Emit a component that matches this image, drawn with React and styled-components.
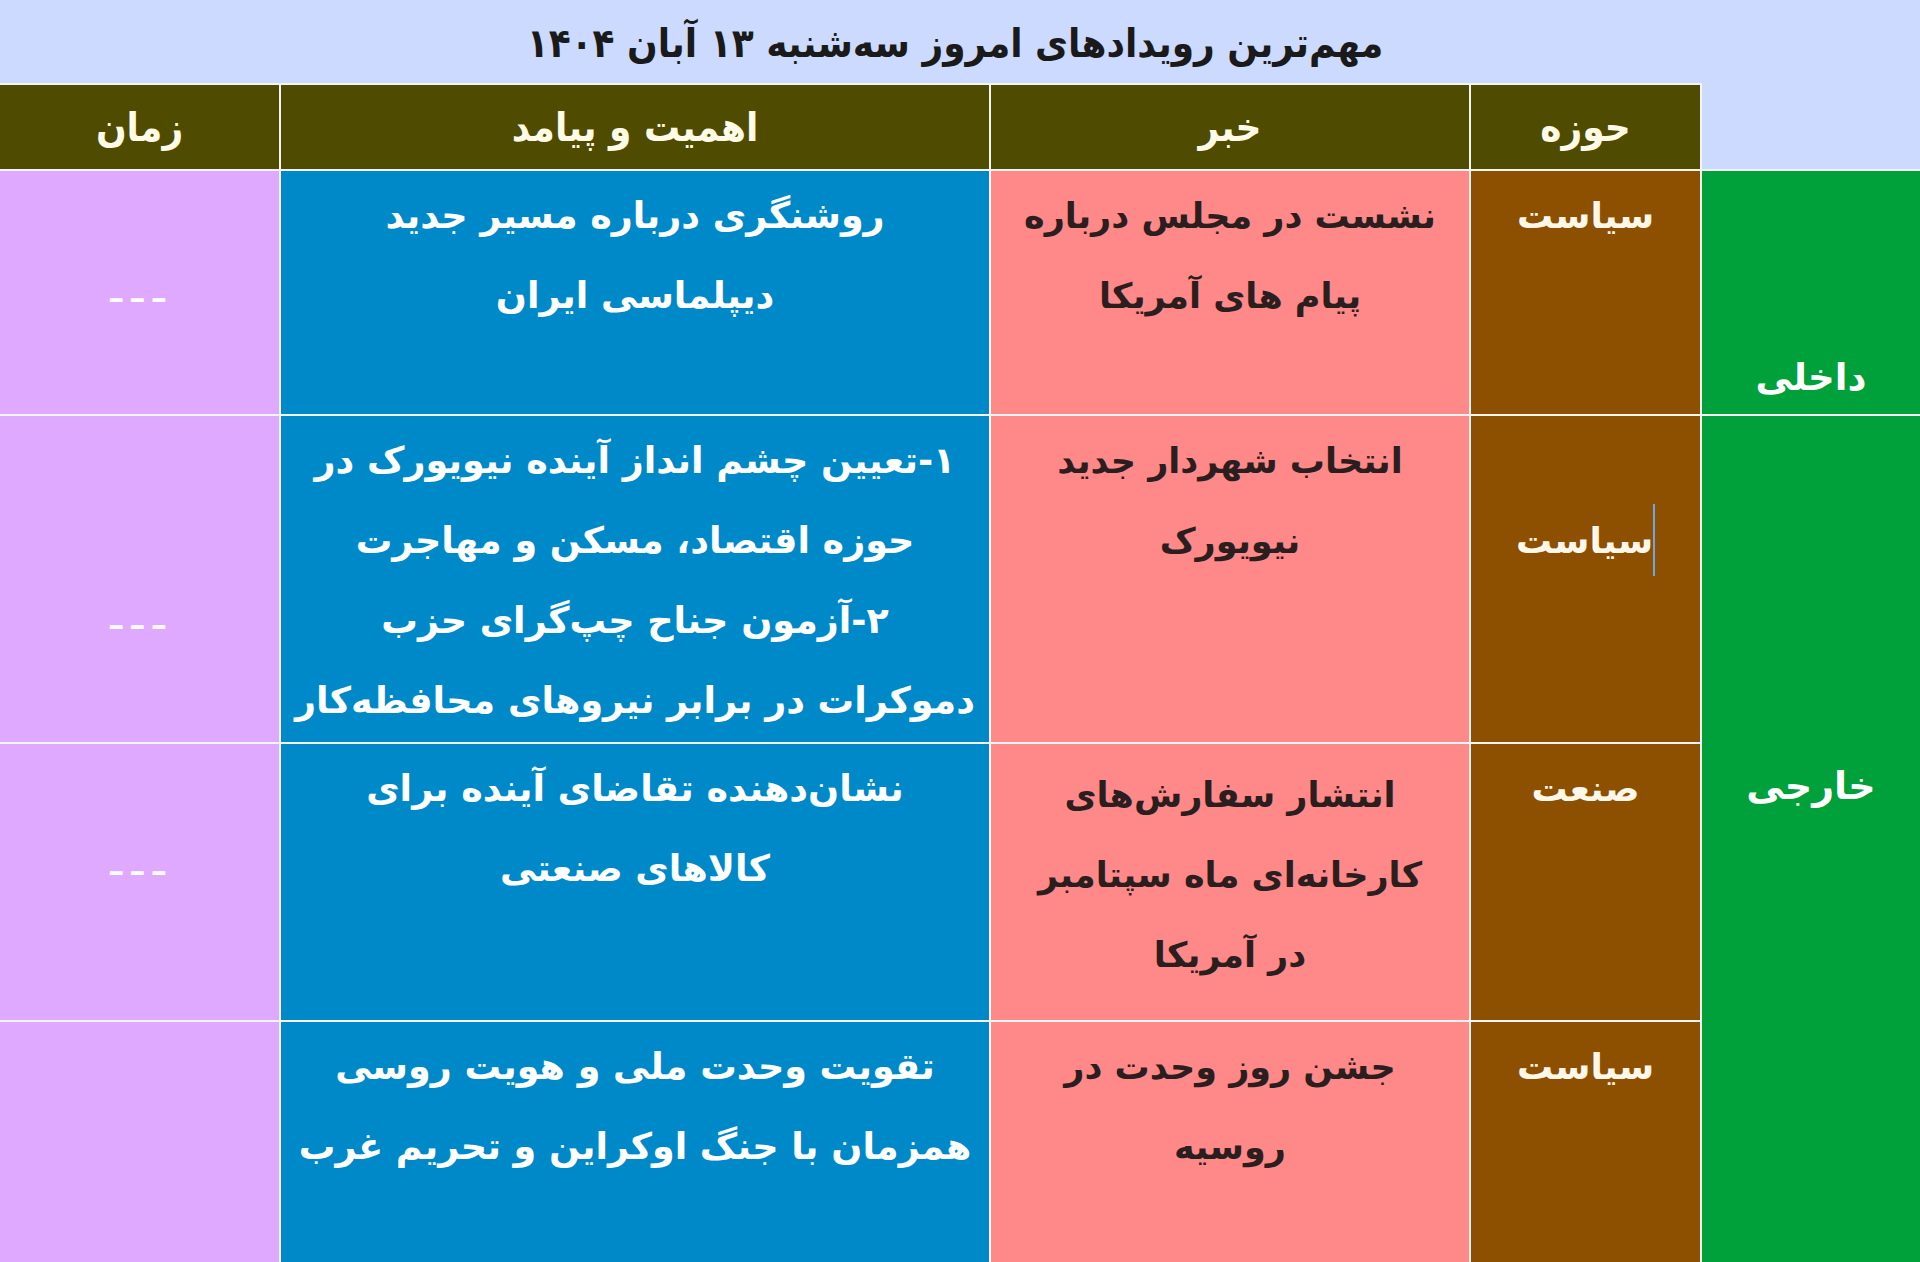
import React from 'react';
import styled, { createGlobalStyle } from 'styled-components';

const GlobalStyle = createGlobalStyle`
  html, body {
    margin: 0;
    padding: 0;
    background: #ffffff;
    overflow: hidden;
  }
  body {
    font-family: "DejaVu Sans", "Noto Sans", sans-serif;
  }
`;

const colors = {
  title: '#CDDAFF',
  head: '#4F4B00',
  scope: '#00A03A',
  field: '#8C5000',
  news: '#FF8888',
  impact: '#0089C9',
  time: '#DEA9FF',
};

const Sheet = styled.div`
  direction: rtl;
  width: 1920px;
  height: 1262px;
  overflow: hidden;
  display: grid;
  grid-template-columns: 220px 231px 480px 710px 279px;
  grid-template-rows: 83px 86px 245px 328px 278px 260px;
  background: ${colors.title};
`;

const Title = styled.div`
  grid-column: 1 / -1;
  display: flex;
  align-items: center;
  justify-content: center;
  padding: 2px 10px 0 0;
  font-family: "DejaVu Sans Condensed", "DejaVu Sans", sans-serif;
  font-weight: bold;
  font-size: 40px;
  color: #1a1a1a;
  background: ${colors.title};
`;

const Corner = styled.div`
  background: ${colors.title};
  border-left: 2px solid #f4f4f4;
`;

const Head = styled.div`
  display: flex;
  align-items: center;
  justify-content: center;
  background: ${colors.head};
  color: #fffbe6;
  font-family: "DejaVu Sans Condensed", "DejaVu Sans", sans-serif;
  font-weight: bold;
  font-size: 40px;
  border-top: 2px solid #f4f4f4;
  border-left: ${(p) => (p.$last ? 'none' : '2px solid #f4f4f4')};
  box-sizing: border-box;
`;

const Cell = styled.div`
  grid-row: ${(p) => p.$rows || 'auto'};
  background: ${(p) => p.$bg};
  color: ${(p) => p.$ink || '#ffffff'};
  border-top: 2px solid #f4f4f4;
  border-left: ${(p) => (p.$last ? 'none' : '2px solid #f4f4f4')};
  box-sizing: border-box;
  padding-top: ${(p) => p.$top || 5}px;
  text-align: center;
  font-weight: bold;
  font-size: ${(p) => p.$size || 35}px;
  line-height: 80px;
  white-space: pre;
  overflow: hidden;
`;

const Caret = styled.span`
  display: inline-block;
  vertical-align: middle;
  width: 2px;
  height: 72px;
  margin-top: -6px;
  background: #6ea6ee;
`;

const Dashes = styled.span`
  font-size: 48px;
  letter-spacing: 4px;
  font-weight: normal;
`;

const rows = [
  {
    field: 'سیاست',
    news: 'نشست در مجلس درباره\nپیام های آمریکا',
    impact: 'روشنگری درباره مسیر جدید\nدیپلماسی ایران',
    timeTop: 85,
  },
  {
    field: 'سیاست',
    fieldTop: 85,
    caret: true,
    news: 'انتخاب شهردار جدید\nنیویورک',
    impact:
      '۱-تعیین چشم انداز آینده نیویورک در\nحوزه اقتصاد، مسکن و مهاجرت\n۲-آزمون جناح چپ‌گرای حزب\nدموکرات در برابر نیروهای محافظه‌کار',
    timeTop: 167,
  },
  {
    field: 'صنعت',
    news: 'انتشار سفارش‌های\nکارخانه‌ای ماه سپتامبر\nدر آمریکا',
    newsTop: 11,
    impact: 'نشان‌دهنده تقاضای آینده برای\nکالاهای صنعتی',
    timeTop: 85,
  },
  {
    field: 'سیاست',
    news: 'جشن روز وحدت در\nروسیه',
    impact: 'تقویت وحدت ملی و هویت روسی\nهمزمان با جنگ اوکراین و تحریم غرب',
  },
];

export default function App() {
  return (
    <>
      <GlobalStyle />
      <Sheet>
        <Title>مهم‌ترین رویدادهای امروز سه‌شنبه ۱۳ آبان ۱۴۰۴</Title>

        <Corner />
        <Head>حوزه</Head>
        <Head>خبر</Head>
        <Head>اهمیت و پیامد</Head>
        <Head $last>زمان</Head>

        {rows.map((row, i) => (
          <React.Fragment key={i}>
            {i === 0 && (
              <Cell $bg={colors.scope} $top={167} $size={37}>
                داخلی
              </Cell>
            )}
            {i === 1 && (
              <Cell $bg={colors.scope} $rows="span 3" $top={330} $size={38}>
                خارجی
              </Cell>
            )}
            <Cell $bg={colors.field} $ink="#fff8ea" $top={row.fieldTop} $size={36}>
              {row.caret && <Caret />}
              {row.field}
            </Cell>
            <Cell $bg={colors.news} $ink="#2a1e1e" $top={row.newsTop}>
              {row.news}
            </Cell>
            <Cell $bg={colors.impact} $size={36.5}>
              {row.impact}
            </Cell>
            <Cell $bg={colors.time} $last $top={row.timeTop}>
              {row.timeTop ? <Dashes>---</Dashes> : ''}
            </Cell>
          </React.Fragment>
        ))}
      </Sheet>
    </>
  );
}
